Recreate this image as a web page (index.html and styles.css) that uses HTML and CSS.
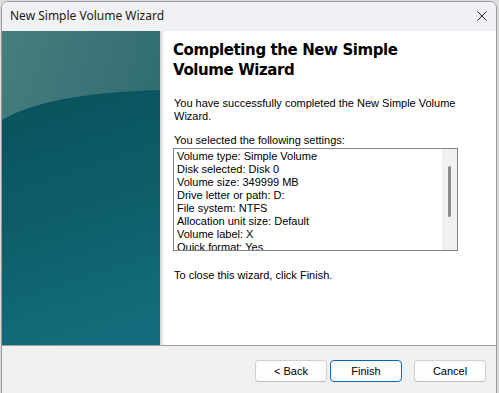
FILE: index.html
```html
<!DOCTYPE html>
<html lang="en">
<head>
  <meta charset="UTF-8">
  <title>New Simple Volume Wizard</title>
  <link rel="stylesheet" href="styles.css">
</head>
<body>

  <div class="window">
    <div class="titlebar">
      <span class="title">New Simple Volume Wizard</span>
      <svg class="close" width="10" height="10" viewBox="0 0 10 10">
        <path d="M0.5 0.5 L9.5 9.5 M9.5 0.5 L0.5 9.5" stroke="#1a1a1a" stroke-width="1" fill="none"/>
      </svg>
    </div>

    <div class="main">
      <div class="banner">
        <svg width="158" height="314" viewBox="0 0 158 314" preserveAspectRatio="none">
          <defs>
            <linearGradient id="top" x1="0" y1="0" x2="1" y2="0.6">
              <stop offset="0" stop-color="#467e7e"/>
              <stop offset="1" stop-color="#2d696e"/>
            </linearGradient>
            <linearGradient id="body" x1="0.3" y1="0" x2="0.5" y2="1">
              <stop offset="0" stop-color="#09535c"/>
              <stop offset="0.5" stop-color="#0d5e6a"/>
              <stop offset="1" stop-color="#146d7c"/>
            </linearGradient>
          </defs>
          <rect x="0" y="0" width="158" height="314" fill="url(#top)"/>
          <path d="M0 89 Q45 62 158 59 L158 314 L0 314 Z" fill="url(#body)"/>
        </svg>
      </div>
      <div class="shade"></div>

      <div class="content">
        <h1>Completing the New Simple Volume Wizard</h1>
        <p class="intro">You have successfully completed the New Simple Volume Wizard.</p>
        <p class="label">You selected the following settings:</p>
        <div class="listbox">
          <div class="lines">
            <div>Volume type: Simple Volume</div>
            <div>Disk selected: Disk 0</div>
            <div>Volume size: 349999 MB</div>
            <div>Drive letter or path: D:</div>
            <div>File system: NTFS</div>
            <div>Allocation unit size: Default</div>
            <div>Volume label: X</div>
            <div>Quick format: Yes</div>
          </div>
          <div class="scroll"><div class="thumb"></div></div>
        </div>
        <p class="closing">To close this wizard, click Finish.</p>
      </div>
    </div>

    <div class="footer">
      <button class="btn">&lt; Back</button>
      <button class="btn default">Finish</button>
      <button class="btn cancel">Cancel</button>
    </div>
  </div>

</body>
</html>
```

FILE: styles.css
```css
html, body {
  margin: 0;
  height: 100%;
  overflow: hidden;
}

body {
  background: #dcdcdc;
  font-family: "Liberation Sans", Arial, sans-serif;
  font-size: 11px;
  color: #000;
}

.window {
  margin: 1px 0 0 1px;
  width: 496px;
  height: 398px;
  background: #f0f0f0;
  border: 1px solid #9a9a9a;
  border-radius: 7px 7px 0 0;
  overflow: hidden;
  box-sizing: border-box;
}

.titlebar {
  height: 29px;
  background: #f0f1f4;
  display: flex;
  align-items: center;
  justify-content: space-between;
  padding: 0 9px 0 8px;
}

.title {
  font-family: "Noto Sans", sans-serif;
  font-size: 12px;
  color: #1a1a1a;
  margin-top: -2px;
}

.close {
  margin-top: -2px;
}

.main {
  display: flex;
  height: 314px;
  background: #fff;
  border-bottom: 1px solid #a0a0a0;
}

.banner {
  width: 158px;
  flex: none;
}

.banner svg {
  display: block;
}

.shade {
  width: 5px;
  flex: none;
  background: linear-gradient(to right, #cfcfcf, #ececec 50%, #fff);
}

.content {
  flex: 1;
  padding: 9px 38px 0 9px;
}

h1 {
  font-family: "DejaVu Sans", Verdana, sans-serif;
  font-weight: bold;
  font-size: 15px;
  letter-spacing: -0.4px;
  line-height: 20px;
  margin: 0 0 0 -1px;
  color: #000;
}

p {
  margin: 0;
  line-height: 13px;
}

.intro {
  margin-top: 17px;
}

.label {
  margin-top: 11px;
}

.listbox {
  margin: 1px 0 0 -1px;
  height: 101px;
  border: 1px solid #828282;
  display: flex;
  background: #fff;
}

.lines {
  flex: 1;
  padding: 1px 0 0 3px;
  line-height: 13px;
  overflow: hidden;
}

.scroll {
  width: 15px;
  flex: none;
  background: #f0f0f0;
  position: relative;
}

.thumb {
  position: absolute;
  left: 6px;
  top: 17px;
  width: 3px;
  height: 51px;
  border-radius: 2px;
  background: #8b8b8b;
}

.closing {
  margin-top: 18px;
}

.footer {
  display: flex;
  padding: 14px 0 0 253px;
}

.btn {
  width: 72px;
  height: 22px;
  padding: 0;
  font-family: "Liberation Sans", Arial, sans-serif;
  font-size: 11px;
  color: #000;
  background: #fdfdfd;
  border: 1px solid #d0d0d0;
  border-bottom-color: #bcbcbc;
  border-radius: 4px;
  margin-right: 3px;
}

.btn.default {
  border: 1px solid #0067c0;
}

.btn.cancel {
  margin-left: 9px;
}
```
